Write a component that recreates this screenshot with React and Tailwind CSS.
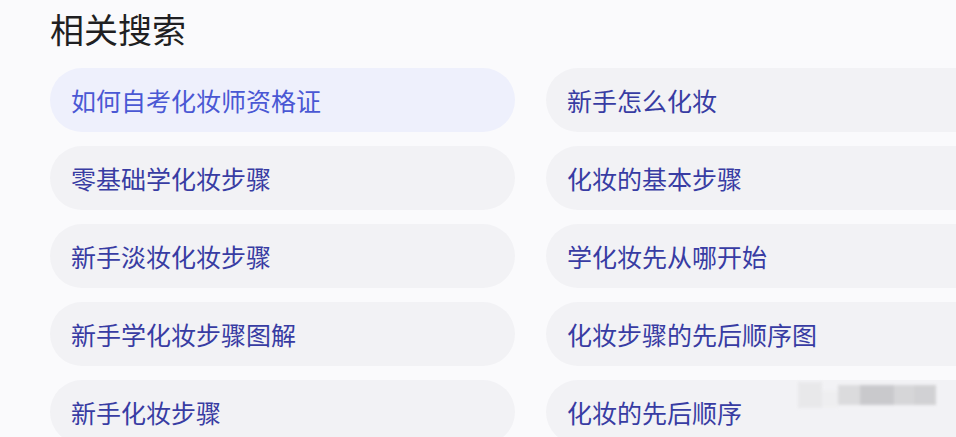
const items = [
  "如何自考化妆师资格证",
  "新手怎么化妆",
  "零基础学化妆步骤",
  "化妆的基本步骤",
  "新手淡妆化妆步骤",
  "学化妆先从哪开始",
  "新手学化妆步骤图解",
  "化妆步骤的先后顺序图",
  "新手化妆步骤",
  "化妆的先后顺序",
];

const Pill = ({ text, active }) => (
  <div
    className={`h-[64px] rounded-full flex items-center pl-[21px] text-[25px] leading-none whitespace-nowrap ${
      active ? "bg-[#eef0fc] text-[#4a58d4]" : "bg-[#f2f2f5] text-[#383ca3]"
    }`}
  >
    {text}
  </div>
);

export default function App() {
  return (
    <div
      className="relative w-[956px] h-[437px] overflow-hidden bg-[#fafafc]"
      style={{ fontFamily: '"Noto Sans CJK SC", "Noto Sans", sans-serif' }}
    >
      <div className="pl-[50px]">
        <h2 className="pt-[12px] mb-[22px] text-[34px] leading-[34px] text-[#1f1f22] font-normal">
          相关搜索
        </h2>
        <div className="grid grid-cols-[465px_465px] gap-x-[31px] gap-y-[14px]">
          {items.map((t, i) => (
            <Pill key={t} text={t} active={i === 0} />
          ))}
        </div>
      </div>

      {/* blurred watermark over the last pill */}
      <div className="absolute left-[798px] top-[382px] flex items-center blur-[1.5px] opacity-80">
        <div className="w-[24px] h-[26px] bg-[#e6e6e8]" />
        <div className="w-[16px] h-[18px] mt-[8px] bg-[#eeeef0]" />
        <div className="flex h-[20px]">
          <div className="w-[22px] bg-[#d6d6d8]" />
          <div className="w-[34px] bg-[#c0c0c3]" />
          <div className="w-[20px] bg-[#d0d0d2]" />
          <div className="w-[22px] bg-[#cacacc]" />
        </div>
      </div>
    </div>
  );
}
